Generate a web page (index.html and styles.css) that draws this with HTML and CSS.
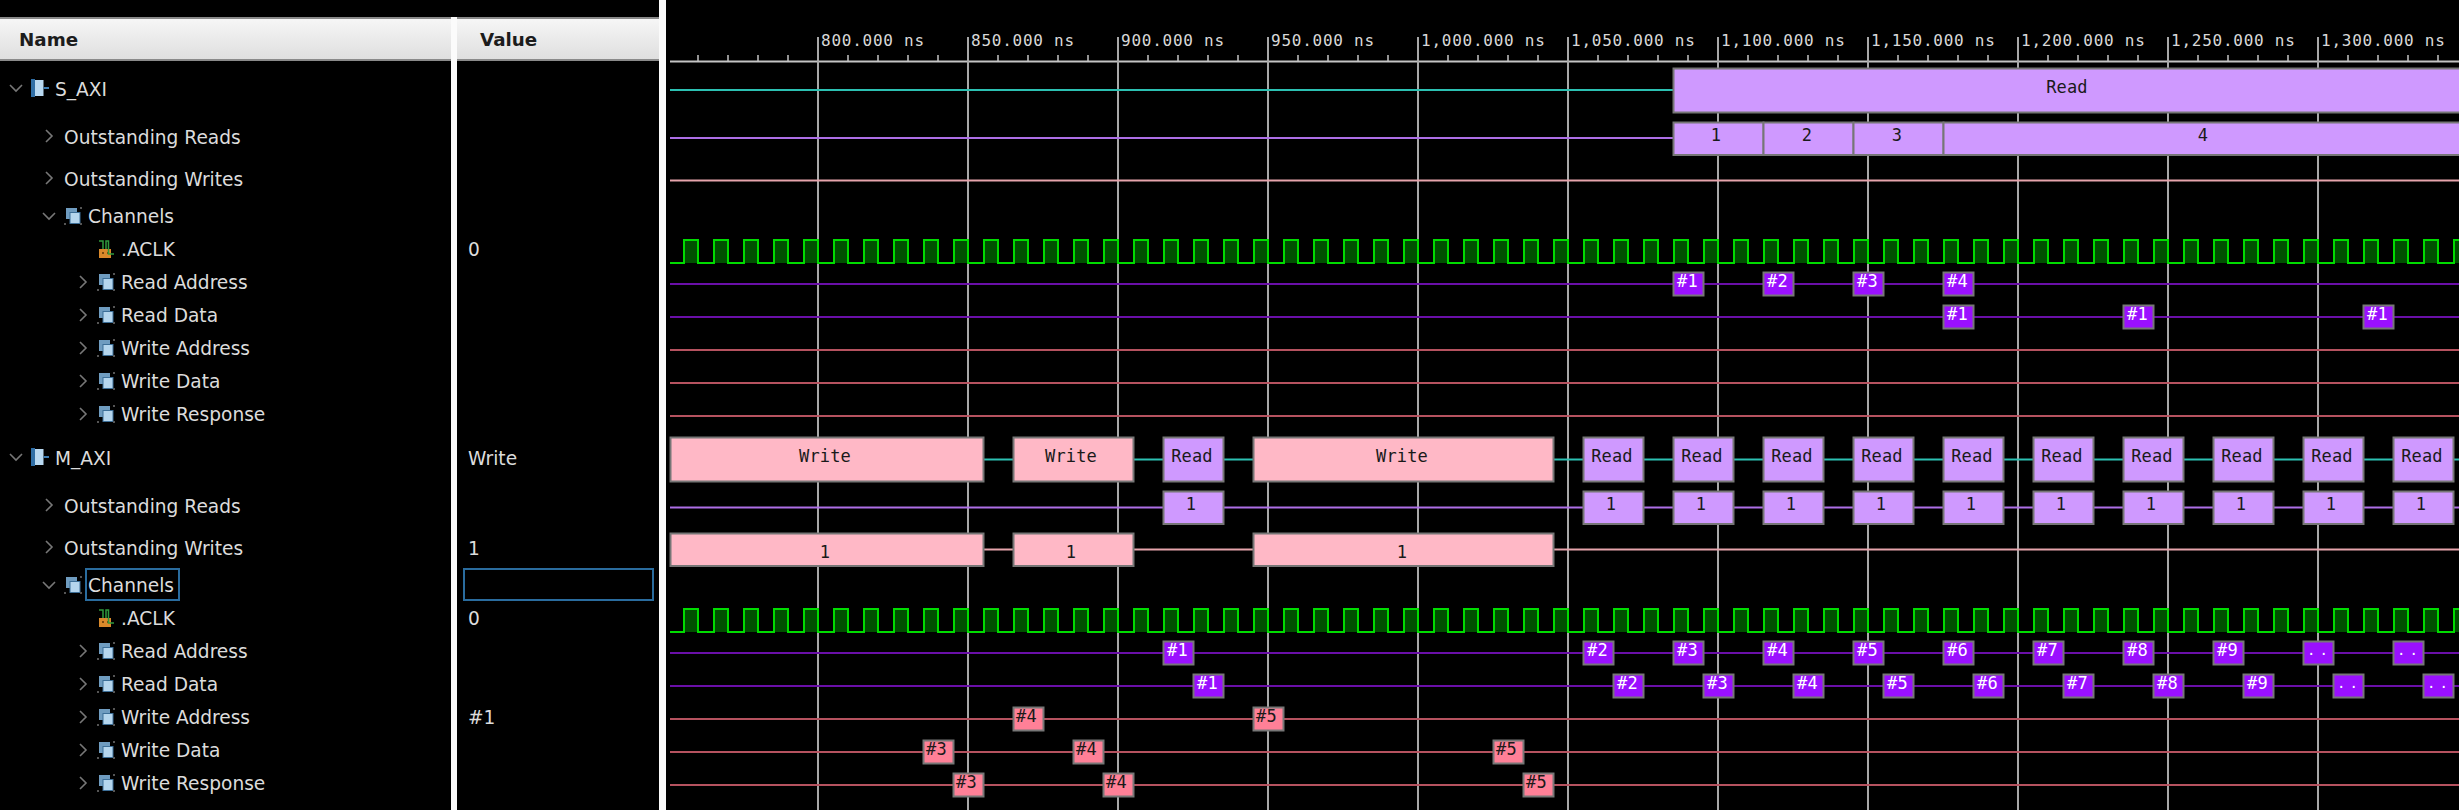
FILE: index.html
```html
<!DOCTYPE html>
<html lang="en">
<head>
<meta charset="utf-8">
<title>Waveform</title>
<link rel="stylesheet" href="styles.css">
</head>
<body>
<svg class="defs" width="0" height="0" aria-hidden="true">
  <symbol id="i-group" viewBox="0 0 18 18">
    <rect x="0" y="0" width="4" height="18" fill="#2f6ea6"/>
    <rect x="4" y="1" width="8.500" height="16" fill="#b9d9f2"/>
    <rect x="12.500" y="8" width="5.500" height="2" fill="#3f7fb5"/>
  </symbol>
  <symbol id="i-chan" viewBox="0 0 18 18">
    <rect x="2" y="1" width="11" height="11" fill="#6f9cc0"/>
    <rect x="6" y="5.500" width="10" height="11" fill="#b5d6ee" stroke="#3d6f98"/>
    <rect x="0" y="16" width="2" height="2" fill="#555"/>
    <rect x="16" y="0" width="2" height="2" fill="#555"/>
    <rect x="16" y="16" width="2" height="2" fill="#555"/>
  </symbol>
  <symbol id="i-clk" viewBox="0 0 16 18">
    <rect x="1" y="9" width="12" height="9" fill="#d9892b"/>
    <rect x="4" y="12" width="2" height="2" fill="#7a4a10"/>
    <rect x="9" y="12" width="2" height="2" fill="#7a4a10"/>
    <path d="M1 1H5V9M8 9V1H10.500V14H16" fill="none" stroke="#2f9a3d" stroke-width="1.500"/>
  </symbol>
  <symbol id="i-down" viewBox="0 0 16 10">
    <path d="M2 2L8 8L14 2" fill="none" stroke="#777" stroke-width="1.600"/>
  </symbol>
  <symbol id="i-right" viewBox="0 0 10 16">
    <path d="M2 2L8 8L2 14" fill="none" stroke="#777" stroke-width="1.600"/>
  </symbol>
</svg>

<main class="app">
  <section class="col col-name">
    <header class="head">Name</header>
    <div class="row row-group lv0"><span class="tw"><svg class="chev-d"><use href="#i-down"/></svg></span><svg class="ic"><use href="#i-group"/></svg><span class="lbl">S_AXI</span></div>
    <div class="row row-sig lv1"><span class="tw tw-plain"><svg class="chev-r"><use href="#i-right"/></svg></span><span class="lbl">Outstanding Reads</span></div>
    <div class="row row-sig lv1"><span class="tw tw-plain"><svg class="chev-r"><use href="#i-right"/></svg></span><span class="lbl">Outstanding Writes</span></div>
    <div class="row lv1"><span class="tw"><svg class="chev-d"><use href="#i-down"/></svg></span><svg class="ic"><use href="#i-chan"/></svg><span class="lbl">Channels</span></div>
    <div class="row lv2"><span class="tw"></span><svg class="ic"><use href="#i-clk"/></svg><span class="lbl">.ACLK</span></div>
    <div class="row lv2"><span class="tw"><svg class="chev-r"><use href="#i-right"/></svg></span><svg class="ic"><use href="#i-chan"/></svg><span class="lbl">Read Address</span></div>
    <div class="row lv2"><span class="tw"><svg class="chev-r"><use href="#i-right"/></svg></span><svg class="ic"><use href="#i-chan"/></svg><span class="lbl">Read Data</span></div>
    <div class="row lv2"><span class="tw"><svg class="chev-r"><use href="#i-right"/></svg></span><svg class="ic"><use href="#i-chan"/></svg><span class="lbl">Write Address</span></div>
    <div class="row lv2"><span class="tw"><svg class="chev-r"><use href="#i-right"/></svg></span><svg class="ic"><use href="#i-chan"/></svg><span class="lbl">Write Data</span></div>
    <div class="row lv2"><span class="tw"><svg class="chev-r"><use href="#i-right"/></svg></span><svg class="ic"><use href="#i-chan"/></svg><span class="lbl">Write Response</span></div>
    <div class="row row-group lv0"><span class="tw"><svg class="chev-d"><use href="#i-down"/></svg></span><svg class="ic"><use href="#i-group"/></svg><span class="lbl">M_AXI</span></div>
    <div class="row row-sig lv1"><span class="tw tw-plain"><svg class="chev-r"><use href="#i-right"/></svg></span><span class="lbl">Outstanding Reads</span></div>
    <div class="row row-sig lv1"><span class="tw tw-plain"><svg class="chev-r"><use href="#i-right"/></svg></span><span class="lbl">Outstanding Writes</span></div>
    <div class="row lv1"><span class="tw"><svg class="chev-d"><use href="#i-down"/></svg></span><svg class="ic"><use href="#i-chan"/></svg><span class="lbl lbl-sel">Channels</span></div>
    <div class="row lv2"><span class="tw"></span><svg class="ic"><use href="#i-clk"/></svg><span class="lbl">.ACLK</span></div>
    <div class="row lv2"><span class="tw"><svg class="chev-r"><use href="#i-right"/></svg></span><svg class="ic"><use href="#i-chan"/></svg><span class="lbl">Read Address</span></div>
    <div class="row lv2"><span class="tw"><svg class="chev-r"><use href="#i-right"/></svg></span><svg class="ic"><use href="#i-chan"/></svg><span class="lbl">Read Data</span></div>
    <div class="row lv2"><span class="tw"><svg class="chev-r"><use href="#i-right"/></svg></span><svg class="ic"><use href="#i-chan"/></svg><span class="lbl">Write Address</span></div>
    <div class="row lv2"><span class="tw"><svg class="chev-r"><use href="#i-right"/></svg></span><svg class="ic"><use href="#i-chan"/></svg><span class="lbl">Write Data</span></div>
    <div class="row lv2"><span class="tw"><svg class="chev-r"><use href="#i-right"/></svg></span><svg class="ic"><use href="#i-chan"/></svg><span class="lbl">Write Response</span></div>
  </section>

  <div class="split split-a"></div>

  <section class="col col-value">
    <header class="head">Value</header>
    <div class="row row-group"></div>
    <div class="row row-sig"></div>
    <div class="row row-sig"></div>
    <div class="row"></div>
    <div class="row"><span class="val">0</span></div>
    <div class="row"></div>
    <div class="row"></div>
    <div class="row"></div>
    <div class="row"></div>
    <div class="row"></div>
    <div class="row row-group"><span class="val">Write</span></div>
    <div class="row row-sig"></div>
    <div class="row row-sig"><span class="val">1</span></div>
    <div class="row"><span class="val-sel"></span></div>
    <div class="row"><span class="val">0</span></div>
    <div class="row"></div>
    <div class="row"></div>
    <div class="row"><span class="val">#1</span></div>
    <div class="row"></div>
    <div class="row"></div>
  </section>

  <div class="split split-b"></div>

  <section class="wave-pane">
    <svg class="wave" viewBox="666 0 1793 810" width="1793" height="810">
      <defs>
        <pattern id="clk" patternUnits="userSpaceOnUse" x="679" y="237" width="30" height="28">
          <rect x="5" y="3" width="14" height="23" fill="#004f00"/>
          <path d="M0 26H5V3H19V26H30" fill="none" stroke="#00dc00" stroke-width="2"/>
        </pattern>
        <pattern id="clk2" patternUnits="userSpaceOnUse" x="679" y="606" width="30" height="28">
          <rect x="5" y="3" width="14" height="23" fill="#004f00"/>
          <path d="M0 26H5V3H19V26H30" fill="none" stroke="#00dc00" stroke-width="2"/>
        </pattern>
      </defs>

      <!-- ruler -->
      <path class="rule" d="M670 61.500H2459"/>
      <path class="tick" d="M698 55V61M728 55V61M758 55V61M788 55V61M848 55V61M878 55V61M908 55V61M938 55V61M998 55V61M1028 55V61M1058 55V61M1088 55V61M1148 55V61M1178 55V61M1208 55V61M1238 55V61M1298 55V61M1328 55V61M1358 55V61M1388 55V61M1448 55V61M1478 55V61M1508 55V61M1538 55V61M1598 55V61M1628 55V61M1658 55V61M1688 55V61M1748 55V61M1778 55V61M1808 55V61M1838 55V61M1898 55V61M1928 55V61M1958 55V61M1988 55V61M2048 55V61M2078 55V61M2108 55V61M2138 55V61M2198 55V61M2228 55V61M2258 55V61M2288 55V61M2348 55V61M2378 55V61M2408 55V61M2438 55V61"/>
      <path class="grid" d="M818 37V810M968 37V810M1118 37V810M1268 37V810M1418 37V810M1568 37V810M1718 37V810M1868 37V810M2018 37V810M2168 37V810M2318 37V810"/>
      <g class="time">
        <text x="821" y="46">800.000 ns</text>
        <text x="971" y="46">850.000 ns</text>
        <text x="1121" y="46">900.000 ns</text>
        <text x="1271" y="46">950.000 ns</text>
        <text x="1421" y="46">1,000.000 ns</text>
        <text x="1571" y="46">1,050.000 ns</text>
        <text x="1721" y="46">1,100.000 ns</text>
        <text x="1871" y="46">1,150.000 ns</text>
        <text x="2021" y="46">1,200.000 ns</text>
        <text x="2171" y="46">1,250.000 ns</text>
        <text x="2321" y="46">1,300.000 ns</text>
      </g>

      <!-- signal baselines -->
      <path class="ln teal" d="M670 90H1673"/>
      <path class="ln lilac" d="M670 138H1673"/>
      <path class="ln rose" d="M670 180.500H2459"/>
      <path class="ln violet" d="M670 284H2459M670 317H2459"/>
      <path class="ln brick" d="M670 350H2459M670 383H2459M670 416H2459"/>
      <path class="ln teal" d="M670 459.500H2459"/>
      <path class="ln lilac" d="M670 507.500H2459"/>
      <path class="ln rose" d="M670 549.500H2459"/>
      <path class="ln violet" d="M670 653H2459M670 686H2459"/>
      <path class="ln brick" d="M670 719H2459M670 752H2459M670 785H2459"/>

      <!-- clocks -->
      <path class="clk-lo" d="M670 263H680M670 632H680"/>
      <rect x="679" y="237" width="1780" height="28" fill="url(#clk)"/>
      <rect x="679" y="606" width="1780" height="28" fill="url(#clk2)"/>

      <!-- S_AXI transactions -->
      <g class="blk rd">
        <rect x="1673.500" y="68.500" width="800" height="44"/>
        <rect x="1673.500" y="122.500" width="90" height="32.500"/>
        <rect x="1763.500" y="122.500" width="90" height="32.500"/>
        <rect x="1853.500" y="122.500" width="90" height="32.500"/>
        <rect x="1943.500" y="122.500" width="530" height="32.500"/>
      </g>
      <g class="lab">
        <text x="2067" y="93">Read</text>
        <text x="1716" y="141">1</text>
        <text x="1807" y="141">2</text>
        <text x="1897" y="141">3</text>
        <text x="2203" y="141">4</text>
      </g>

      <g class="blk beat">
        <rect x="1673.500" y="272.500" width="30" height="23"/>
        <rect x="1763.500" y="272.500" width="30" height="23"/>
        <rect x="1853.500" y="272.500" width="30" height="23"/>
        <rect x="1943.500" y="272.500" width="30" height="23"/>
        <rect x="1943.500" y="305.500" width="30" height="23"/>
        <rect x="2123.500" y="305.500" width="30" height="23"/>
        <rect x="2363.500" y="305.500" width="30" height="23"/>
      </g>
      <g class="tag">
        <text x="1677" y="286.500">#1</text>
        <text x="1767" y="286.500">#2</text>
        <text x="1857" y="286.500">#3</text>
        <text x="1947" y="286.500">#4</text>
        <text x="1947" y="319.500">#1</text>
        <text x="2127" y="319.500">#1</text>
        <text x="2367" y="319.500">#1</text>
      </g>

      <!-- M_AXI transactions -->
      <g class="blk wr">
        <rect x="670.500" y="437.500" width="313" height="44"/>
        <rect x="1013.500" y="437.500" width="120" height="44"/>
        <rect x="1253.500" y="437.500" width="300" height="44"/>
        <rect x="670.500" y="533.500" width="313" height="32.500"/>
        <rect x="1013.500" y="533.500" width="120" height="32.500"/>
        <rect x="1253.500" y="533.500" width="300" height="32.500"/>
      </g>
      <g class="blk rd">
        <rect x="1163.500" y="437.500" width="60" height="44"/>
        <rect x="1583.500" y="437.500" width="60" height="44"/>
        <rect x="1673.500" y="437.500" width="60" height="44"/>
        <rect x="1763.500" y="437.500" width="60" height="44"/>
        <rect x="1853.500" y="437.500" width="60" height="44"/>
        <rect x="1943.500" y="437.500" width="60" height="44"/>
        <rect x="2033.500" y="437.500" width="60" height="44"/>
        <rect x="2123.500" y="437.500" width="60" height="44"/>
        <rect x="2213.500" y="437.500" width="60" height="44"/>
        <rect x="2303.500" y="437.500" width="60" height="44"/>
        <rect x="2393.500" y="437.500" width="60" height="44"/>
        <rect x="1163.500" y="491.500" width="60" height="32.500"/>
        <rect x="1583.500" y="491.500" width="60" height="32.500"/>
        <rect x="1673.500" y="491.500" width="60" height="32.500"/>
        <rect x="1763.500" y="491.500" width="60" height="32.500"/>
        <rect x="1853.500" y="491.500" width="60" height="32.500"/>
        <rect x="1943.500" y="491.500" width="60" height="32.500"/>
        <rect x="2033.500" y="491.500" width="60" height="32.500"/>
        <rect x="2123.500" y="491.500" width="60" height="32.500"/>
        <rect x="2213.500" y="491.500" width="60" height="32.500"/>
        <rect x="2303.500" y="491.500" width="60" height="32.500"/>
        <rect x="2393.500" y="491.500" width="60" height="32.500"/>
      </g>
      <g class="lab">
        <text x="825" y="462">Write</text>
        <text x="1071" y="462">Write</text>
        <text x="1402" y="462">Write</text>
        <text x="1192" y="462">Read</text>
        <text x="1612" y="462">Read</text>
        <text x="1702" y="462">Read</text>
        <text x="1792" y="462">Read</text>
        <text x="1882" y="462">Read</text>
        <text x="1972" y="462">Read</text>
        <text x="2062" y="462">Read</text>
        <text x="2152" y="462">Read</text>
        <text x="2242" y="462">Read</text>
        <text x="2332" y="462">Read</text>
        <text x="2422" y="462">Read</text>
        <text x="1191" y="510">1</text>
        <text x="1611" y="510">1</text>
        <text x="1701" y="510">1</text>
        <text x="1791" y="510">1</text>
        <text x="1881" y="510">1</text>
        <text x="1971" y="510">1</text>
        <text x="2061" y="510">1</text>
        <text x="2151" y="510">1</text>
        <text x="2241" y="510">1</text>
        <text x="2331" y="510">1</text>
        <text x="2421" y="510">1</text>
        <text x="825" y="558">1</text>
        <text x="1071" y="558">1</text>
        <text x="1402" y="558">1</text>
      </g>

      <g class="blk beat">
        <rect x="1163.500" y="641.500" width="30" height="23"/>
        <rect x="1583.500" y="641.500" width="30" height="23"/>
        <rect x="1673.500" y="641.500" width="30" height="23"/>
        <rect x="1763.500" y="641.500" width="30" height="23"/>
        <rect x="1853.500" y="641.500" width="30" height="23"/>
        <rect x="1943.500" y="641.500" width="30" height="23"/>
        <rect x="2033.500" y="641.500" width="30" height="23"/>
        <rect x="2123.500" y="641.500" width="30" height="23"/>
        <rect x="2213.500" y="641.500" width="30" height="23"/>
        <rect x="2303.500" y="641.500" width="30" height="23"/>
        <rect x="2393.500" y="641.500" width="30" height="23"/>
        <rect x="1193.500" y="674.500" width="30" height="23"/>
        <rect x="1613.500" y="674.500" width="30" height="23"/>
        <rect x="1703.500" y="674.500" width="30" height="23"/>
        <rect x="1793.500" y="674.500" width="30" height="23"/>
        <rect x="1883.500" y="674.500" width="30" height="23"/>
        <rect x="1973.500" y="674.500" width="30" height="23"/>
        <rect x="2063.500" y="674.500" width="30" height="23"/>
        <rect x="2153.500" y="674.500" width="30" height="23"/>
        <rect x="2243.500" y="674.500" width="30" height="23"/>
        <rect x="2333.500" y="674.500" width="30" height="23"/>
        <rect x="2423.500" y="674.500" width="30" height="23"/>
      </g>
      <g class="tag">
        <text x="1167" y="655.500">#1</text>
        <text x="1587" y="655.500">#2</text>
        <text x="1677" y="655.500">#3</text>
        <text x="1767" y="655.500">#4</text>
        <text x="1857" y="655.500">#5</text>
        <text x="1947" y="655.500">#6</text>
        <text x="2037" y="655.500">#7</text>
        <text x="2127" y="655.500">#8</text>
        <text x="2217" y="655.500">#9</text>
        <text class="dots" x="2307" y="655">..</text>
        <text class="dots" x="2397" y="655">..</text>
        <text x="1197" y="688.500">#1</text>
        <text x="1617" y="688.500">#2</text>
        <text x="1707" y="688.500">#3</text>
        <text x="1797" y="688.500">#4</text>
        <text x="1887" y="688.500">#5</text>
        <text x="1977" y="688.500">#6</text>
        <text x="2067" y="688.500">#7</text>
        <text x="2157" y="688.500">#8</text>
        <text x="2247" y="688.500">#9</text>
        <text class="dots" x="2337" y="688">..</text>
        <text class="dots" x="2427" y="688">..</text>
      </g>

      <g class="blk beat-wr">
        <rect x="1013.500" y="707.500" width="30" height="23"/>
        <rect x="1253.500" y="707.500" width="30" height="23"/>
        <rect x="923.500" y="740.500" width="30" height="23"/>
        <rect x="1073.500" y="740.500" width="30" height="23"/>
        <rect x="1493.500" y="740.500" width="30" height="23"/>
        <rect x="953.500" y="773.500" width="30" height="23"/>
        <rect x="1103.500" y="773.500" width="30" height="23"/>
        <rect x="1523.500" y="773.500" width="30" height="23"/>
      </g>
      <g class="tag tag-wr">
        <text x="1016" y="721.500">#4</text>
        <text x="1256" y="721.500">#5</text>
        <text x="926" y="754.500">#3</text>
        <text x="1076" y="754.500">#4</text>
        <text x="1496" y="754.500">#5</text>
        <text x="956" y="787.500">#3</text>
        <text x="1106" y="787.500">#4</text>
        <text x="1526" y="787.500">#5</text>
      </g>
    </svg>
  </section>
</main>
</body>
</html>
```

FILE: styles.css
```css
* { box-sizing: border-box; }

html, body {
  margin: 0;
  height: 100%;
  background: #000;
  overflow: hidden;
}

.defs { position: absolute; }

.app {
  display: flex;
  height: 810px;
  font-family: "DejaVu Sans", sans-serif;
  color: #dcdcdc;
}

.col {
  flex: none;
  padding-top: 17px;
}
.col-name { width: 451px; }
.col-value { width: 202px; }

.split {
  flex: none;
  background: #fbfbfb;
}
.split-a { width: 6px; margin-top: 17px; }
.split-b { width: 7px; }

.head {
  height: 44px;
  display: flex;
  align-items: center;
  padding-left: 19px;
  font-size: 18.300px;
  font-weight: bold;
  color: #1c1c1c;
  background: linear-gradient(#f6f6f6, #dfdfdf);
  border-top: 2px solid #8a8a8a;
  border-bottom: 2px solid #8a8a8a;
}
.col-value .head { padding-left: 23px; }

.row {
  height: 33px;
  display: flex;
  align-items: center;
  font-size: 18.600px;
  white-space: nowrap;
}
.row-group { height: 54px; }
.row-sig { height: 42px; }

.lv0 { padding-left: 8px; }
.lv1 { padding-left: 41px; }
.lv2 { padding-left: 74px; }

.tw {
  flex: none;
  width: 23px;
  display: flex;
  align-items: center;
}
.lv2 .tw { padding-left: 4px; }
.tw-plain { padding-left: 3px; }

.chev-d { width: 16px; height: 10px; }
.chev-r { width: 10px; height: 16px; }

.ic {
  flex: none;
  width: 18px;
  height: 18px;
  margin-right: 6px;
}

.lbl { position: relative; top: 1px; }

.lbl-sel {
  top: 0;
  align-self: stretch;
  display: flex;
  align-items: center;
  margin-left: -3px;
  padding: 2px 4px 0 1px;
  border: 2px solid #2a6c9e;
}

.val {
  padding-left: 11px;
  position: relative;
  top: 1px;
}

.val-sel {
  flex: 1;
  align-self: stretch;
  margin: 0 5px 0 6px;
  border: 2px solid #2a6c9e;
}

.wave-pane {
  flex: 1;
  min-width: 0;
}
.wave { display: block; }

.rule { stroke: #c4c4c4; stroke-width: 2; fill: none; }
.tick { stroke: #c4c4c4; stroke-width: 1.500; fill: none; }
.grid { stroke: #a8a8a8; stroke-width: 2; fill: none; }

.time text {
  font-family: "DejaVu Sans Mono", monospace;
  font-size: 16px;
  letter-spacing: 0.750px;
  fill: #d8d8d8;
}

.ln { fill: none; stroke-width: 2; }
.teal { stroke: #2cc0b2; }
.lilac { stroke: #ad6fe6; }
.rose { stroke: #e6a4ac; }
.violet { stroke: #6a0fa8; }
.brick { stroke: #b5525f; }

.clk-lo { stroke: #00dc00; stroke-width: 2; fill: none; }

.blk rect { stroke: #767676; stroke-width: 2; }
.rd rect { fill: #cf99ff; }
.wr rect { fill: #ffb8c6; }
.beat rect { fill: #9a10ff; }
.beat-wr rect { fill: #ff8097; }

.lab text {
  font-family: "DejaVu Sans Mono", monospace;
  font-size: 17px;
  letter-spacing: 0.150px;
  text-anchor: middle;
  fill: #1a1a1a;
}

.tag text {
  font-family: "DejaVu Sans Mono", monospace;
  font-size: 17px;
  letter-spacing: 0.150px;
  fill: #fff;
}
.tag-wr text { fill: #1a1a1a; }
.tag .dots { letter-spacing: 4px; font-size: 14px; }
```
